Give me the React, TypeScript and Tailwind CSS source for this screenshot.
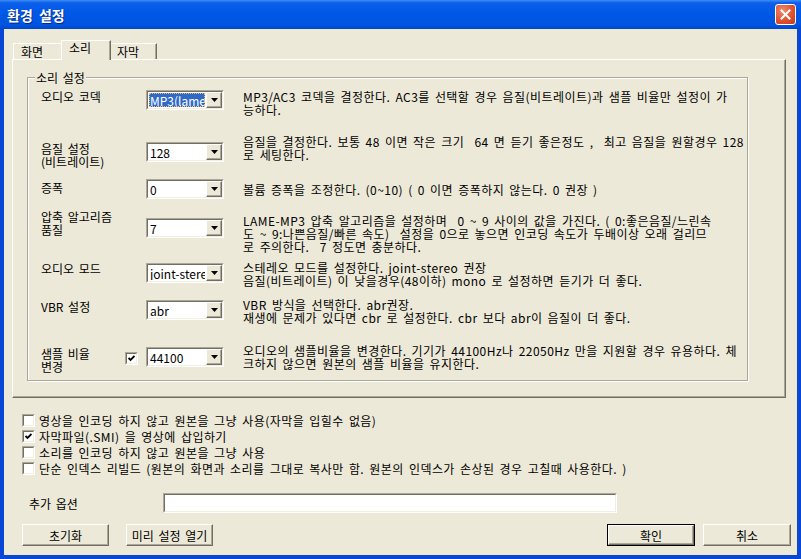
import React from "react"

const FONT = "font-['Noto_Sans_CJK_KR','Noto_Sans_CJK_SC',sans-serif]"

const DropArrow = () => (
  <svg width="7" height="4" viewBox="0 0 7 4">
    <polygon points="0,0 7,0 3.5,4" fill="#000" />
  </svg>
)

const Combo = ({ value, selected }: { value: string; selected?: boolean }) => {
  return (
    <div className="w-[78px] h-[20px] border border-t-[#aca899] border-l-[#aca899] border-b-white border-r-white">
      <div className="flex h-full border border-t-[#716f64] border-l-[#716f64] border-b-[#f1efe2] border-r-[#f1efe2] bg-white">
        <div className="flex-1 overflow-hidden p-[1px]">
          {selected ? (
            <div className="h-full bg-[#316ac5] text-white outline-1 outline-dotted outline-[#f0c060] -outline-offset-1 flex items-center overflow-hidden">
              <span className="pl-[1px] whitespace-nowrap leading-[13px]">{value}</span>
            </div>
          ) : (
            <div className="h-full flex items-center overflow-hidden">
              <span className="pl-[1px] whitespace-nowrap leading-[13px]">{value}</span>
            </div>
          )}
        </div>
        <div className="w-[16px] h-full flex items-center justify-center bg-[#ece9d8] border border-t-white border-l-white border-b-[#716f64] border-r-[#716f64] shadow-[inset_-1px_-1px_0_#aca899]">
          <DropArrow />
        </div>
      </div>
    </div>
  )
}

const CheckBox = ({ checked }: { checked?: boolean }) => (
  <div className="w-[13px] h-[13px] shrink-0 border border-t-[#aca899] border-l-[#aca899] border-b-white border-r-white">
    <div className="w-full h-full flex items-center justify-center bg-white border border-t-[#716f64] border-l-[#716f64] border-b-[#f1efe2] border-r-[#f1efe2]">
      {checked && (
        <svg width="7" height="7" viewBox="0 0 7 7">
          <path d="M0.5 3 L2.5 5 L6.5 1" stroke="#000" strokeWidth="1.8" fill="none" />
        </svg>
      )}
    </div>
  </div>
)

const Button = ({ label, isDefault, className }: { label: string; isDefault?: boolean; className: string }) => (
  <div className={`${className} h-[22px] ${isDefault ? "border border-black" : ""}`}>
    <div className="h-full flex items-center justify-center border border-t-white border-l-white border-b-[#716f64] border-r-[#716f64] shadow-[inset_-1px_-1px_0_#aca899] bg-[#ece9d8]">
      <span className="leading-[13px]">{label}</span>
    </div>
  </div>
)

type Row = {
  h: string
  labelMt: string
  comboMt: string
  descMt: string
  label: string[]
  value: string
  selected?: boolean
  check?: boolean
  desc: string[]
}

const rows: Row[] = [
  {
    h: "h-[45px]", labelMt: "mt-0", comboMt: "mt-0", descMt: "mt-0",
    label: ["오디오 코덱"], value: "MP3(lame)", selected: true,
    desc: ["MP3/AC3 코덱을 결정한다. AC3를 선택할 경우 음질(비트레이트)과 샘플 비율만 설정이 가", "능하다."],
  },
  {
    h: "h-[44px]", labelMt: "mt-[7px]", comboMt: "mt-[7px]", descMt: "mt-0",
    label: ["음질 설정", "(비트레이트)"], value: "128",
    desc: ["음질을 결정한다. 보통 48 이면 작은 크기  64 면 듣기 좋은정도 ,  최고 음질을 원할경우 128", "로 세팅한다."],
  },
  {
    h: "h-[31px]", labelMt: "mt-[2px]", comboMt: "mt-0", descMt: "mt-[4px]",
    label: ["증폭"], value: "0",
    desc: ["볼륨 증폭을 조정한다. (0~10) ( 0 이면 증폭하지 않는다. 0 권장 )"],
  },
  {
    h: "h-[51px]", labelMt: "mt-0", comboMt: "mt-[8px]", descMt: "mt-[4px]",
    label: ["압축 알고리즘", "품질"], value: "7",
    desc: [
      "LAME-MP3 압축 알고리즘을 설정하며  0 ~ 9 사이의 값을 가진다. ( 0:좋은음질/느린속",
      "도 ~ 9:나쁜음질/빠른 속도)  설정을 0으로 놓으면 인코딩 속도가 두배이상 오래 걸리므",
      "로 주의한다.  7 정도면 충분하다.",
    ],
  },
  {
    h: "h-[37px]", labelMt: "mt-[1px]", comboMt: "mt-[2px]", descMt: "mt-0",
    label: ["오디오 모드"], value: "joint-stereo",
    desc: ["스테레오 모드를 설정한다. joint-stereo 권장", "음질(비트레이트) 이 낮을경우(48이하) mono 로 설정하면 듣기가 더 좋다."],
  },
  {
    h: "h-[46px]", labelMt: "mt-[2px]", comboMt: "mt-[2px]", descMt: "mt-0",
    label: ["VBR 설정"], value: "abr",
    desc: ["VBR 방식을 선택한다. abr권장.", "재생에 문제가 있다면 cbr 로 설정한다. cbr 보다 abr이 음질이 더 좋다."],
  },
  {
    h: "h-[36px]", labelMt: "mt-[3px]", comboMt: "mt-[3px]", descMt: "mt-0",
    label: ["샘플 비율", "변경"], value: "44100", check: true,
    desc: ["오디오의 샘플비율을 변경한다. 기기가 44100Hz나 22050Hz 만을 지원할 경우 유용하다. 체", "크하지 않으면 원본의 샘플 비율을 유지한다."],
  },
]

const options = [
  { label: "영상을 인코딩 하지 않고 원본을 그냥 사용(자막을 입힐수 없음)", checked: false },
  { label: "자막파일(.SMI) 을 영상에 삽입하기", checked: true },
  { label: "소리를 인코딩 하지 않고 원본을 그냥 사용", checked: false },
  { label: "단순 인덱스 리빌드 (원본의 화면과 소리를 그대로 복사만 함. 원본의 인덱스가 손상된 경우 고칠때 사용한다. )", checked: false },
]

const App = () => {
  return (
    <div className={`w-[801px] h-[559px] flex flex-col ${FONT} text-[12px] text-black overflow-hidden [word-spacing:2px]`}>
      {/* title bar */}
      <div className="h-[29px] shrink-0 flex items-center justify-between pl-[7px] pr-[5px] bg-[linear-gradient(to_bottom,#3d8ef5_0%,#0b5fea_10%,#0058e6_45%,#0054e0_85%,#0047cc_100%)]">
        <span className="text-white font-bold text-[14px] leading-[15px] mt-[1px] [word-spacing:3px] [text-shadow:1px_1px_0_#0a2a80]">환경 설정</span>
        <div className="w-[21px] h-[21px] rounded-[3px] border border-white flex items-center justify-center bg-[radial-gradient(circle_at_35%_30%,#f08a6c_0%,#e0512f_55%,#c23a18_100%)]">
          <svg width="11" height="11" viewBox="0 0 11 11">
            <path d="M1.5 1.5 L9.5 9.5 M9.5 1.5 L1.5 9.5" stroke="#fff" strokeWidth="2" strokeLinecap="square" />
          </svg>
        </div>
      </div>

      {/* body */}
      <div className="flex-1 flex flex-col bg-[#ece9d8] border-x-4 border-b-4 border-[#0846d6]">
        {/* tabs */}
        <div className="flex items-end h-[19px] mt-[11px] ml-[9px]">
          <div className="w-[48px] h-[16px] flex items-center pl-[7px] border-t border-l border-t-white border-l-white">
            <span className="leading-[13px]">화면</span>
          </div>
          <div className="relative z-10 -mb-[1px] w-[50px] h-[20px] pl-[7px] bg-[#ece9d8] border-t border-l border-r border-t-white border-l-white border-r-[#716f64] shadow-[inset_-1px_0_0_#aca899]">
            <span className="leading-[13px] block">소리</span>
          </div>
          <div className="w-[46px] h-[16px] flex items-center pl-[6px] border-t border-r border-t-white border-r-[#716f64] shadow-[inset_-1px_0_0_#aca899]">
            <span className="leading-[13px]">자막</span>
          </div>
        </div>

        {/* tab panel */}
        <div className="ml-[8px] mr-[11px] h-[339px] border border-t-white border-l-white border-b-[#716f64] border-r-[#716f64] shadow-[inset_-1px_-1px_0_#aca899]">
          <div className="relative mt-[17px] ml-[14px] w-[721px] h-[304px] border border-[#aca899] shadow-[1px_1px_0_#fff,inset_1px_1px_0_#fff] pt-[12px] pl-[13px]">
            <span className="absolute -top-[7px] left-[7px] px-[1px] bg-[#ece9d8] leading-[13px]">소리 설정</span>
            {rows.map((r, i) => (
              <div key={i} className={`flex items-start ${r.h}`}>
                <div className={`w-[84px] leading-[13px] whitespace-nowrap ${r.labelMt}`}>
                  {r.label.map((l, j) => (
                    <div key={j}>{l}</div>
                  ))}
                </div>
                <div className="w-[21px] mt-[8px]">{r.check && <CheckBox checked />}</div>
                <div className={r.comboMt}>
                  <Combo value={r.value} selected={r.selected} />
                </div>
                <div className={`ml-[19px] leading-[13px] whitespace-nowrap tracking-[0.45px] ${r.descMt}`}>
                  {r.desc.map((d, j) => (
                    <div key={j} className="whitespace-pre">{d}</div>
                  ))}
                </div>
              </div>
            ))}
          </div>
        </div>

        {/* options */}
        <div className="mt-[14px] ml-[18px] flex flex-col">
          {options.map((o, i) => (
            <div key={i} className="h-[16px] flex items-center gap-[4px]">
              <CheckBox checked={o.checked} />
              <span className="leading-[13px] whitespace-nowrap tracking-[0.45px]">{o.label}</span>
            </div>
          ))}
        </div>

        {/* extra options */}
        <div className="mt-[17px] ml-[25px] flex items-center h-[20px]">
          <span className="w-[134px] leading-[13px]">추가 옵션</span>
          <div className="w-[454px] h-[20px] border border-t-[#aca899] border-l-[#aca899] border-b-white border-r-white">
            <div className="w-full h-full bg-white border border-t-[#716f64] border-l-[#716f64] border-b-[#f1efe2] border-r-[#f1efe2]" />
          </div>
        </div>

        {/* buttons */}
        <div className="mt-[11px] ml-[18px] mr-[6px] flex">
          <Button label="초기화" className="w-[87px]" />
          <Button label="미리 설정 열기" className="w-[87px] ml-[17px]" />
          <Button label="확인" isDefault className="w-[88px] ml-auto" />
          <Button label="취소" className="w-[88px] ml-[8px]" />
        </div>
      </div>
    </div>
  )
}

export default App
